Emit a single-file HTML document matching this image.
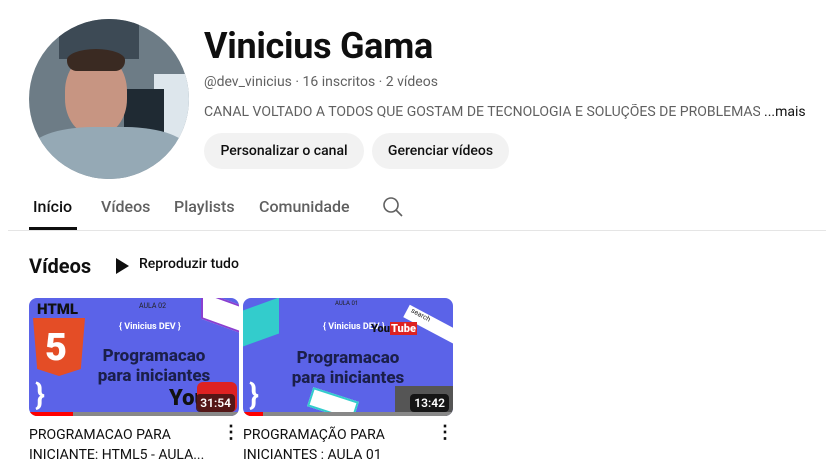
<!DOCTYPE html>
<html><head><meta charset="utf-8"><style>
*{margin:0;padding:0;box-sizing:border-box}
body{width:826px;height:466px;overflow:hidden;background:#fff;font-family:Roboto,"Liberation Sans",Arial,sans-serif;color:#0f0f0f;position:relative}
.a{position:absolute}
.btn{position:absolute;top:133px;height:36px;border-radius:18px;background:#f2f2f2;font-size:14px;font-weight:500;line-height:36px;text-align:center}
.tab{position:absolute;top:197px;font-size:16px;font-weight:500;color:#606060}
.th{position:absolute;top:298px;width:210px;height:118px;border-radius:8px;overflow:hidden;background:#5b63e8}
.dur{position:absolute;right:4px;bottom:4px;background:rgba(0,0,0,.75);color:#fff;font-size:12px;font-weight:600;padding:2px 4px;border-radius:4px}
.bar{position:absolute;left:0;bottom:0;height:4px;width:100%;background:#888}
.bar i{display:block;height:4px;background:#f00}
.big{position:absolute;left:0;width:100%;text-align:center;font-weight:800;color:#1b1f4a;font-size:17px;line-height:20px}
.vt{position:absolute;top:425px;font-size:14px;line-height:20px;width:185px}
.dots{position:absolute;top:424px;font-size:18px;font-weight:700;line-height:18px}
</style></head><body>
<div class="a" style="left:29px;top:19px;width:160px;height:160px;border-radius:50%;overflow:hidden;background:#6d7c86">
 <div class="a" style="left:30px;top:0;width:80px;height:40px;background:#3d4a55"></div>
 <div class="a" style="left:125px;top:55px;width:40px;height:70px;background:#dde6ec"></div>
 <div class="a" style="left:95px;top:70px;width:40px;height:45px;background:#1f2a33"></div>
 <div class="a" style="left:36px;top:36px;width:62px;height:80px;border-radius:45%;background:#c79582"></div>
 <div class="a" style="left:38px;top:30px;width:58px;height:22px;border-radius:50% 50% 10px 10px;background:#3a2a22"></div>
 <div class="a" style="left:0;top:108px;width:160px;height:60px;border-radius:40% 40% 0 0;background:#95a9b5"></div>
</div>
<div class="a" style="left:204px;top:25px;font-size:36px;font-weight:700;letter-spacing:-.3px">Vinicius Gama</div>
<div class="a" style="left:204px;top:74px;font-size:14px;color:#606060">@dev_vinicius · 16 inscritos · 2 vídeos</div>
<div class="a" style="left:204px;top:104px;font-size:14px;color:#606060;white-space:nowrap;width:556px;overflow:hidden">CANAL VOLTADO A TODOS QUE GOSTAM DE TECNOLOGIA E SOLUÇÕES DE PROBLEMAS</div>
<div class="a" style="left:764px;top:104px;font-size:14px;color:#0f0f0f">...mais</div>
<div class="btn" style="left:204px;width:160px">Personalizar o canal</div>
<div class="btn" style="left:372px;width:137px">Gerenciar vídeos</div>
<div class="tab" style="left:33px;color:#0f0f0f">Início</div>
<div class="a" style="left:29px;top:227px;width:48px;height:3px;background:#0f0f0f"></div>
<div class="tab" style="left:101px">Vídeos</div>
<div class="tab" style="left:174px">Playlists</div>
<div class="tab" style="left:259px">Comunidade</div>
<svg class="a" style="left:382px;top:196px" width="22" height="22" viewBox="0 0 22 22"><circle cx="9" cy="9" r="7" fill="none" stroke="#606060" stroke-width="1.6"/><line x1="14" y1="14" x2="20" y2="20" stroke="#606060" stroke-width="1.6"/></svg>
<div class="a" style="left:8px;top:230px;width:818px;height:1px;background:#e5e5e5"></div>
<div class="a" style="left:29px;top:254px;font-size:20px;font-weight:700">Vídeos</div>
<svg class="a" style="left:114px;top:257px" width="16" height="18"><path d="M2 1L15 9L2 17Z" fill="#0f0f0f"/></svg>
<div class="a" style="left:139px;top:256px;font-size:14px;font-weight:500">Reproduzir tudo</div>

<div class="th" style="left:29px">
 <div class="a" style="left:8px;top:2px;font-weight:900;font-size:15px;color:#111">HTML</div>
 <div class="a" style="left:4px;top:20px;width:52px;height:58px;background:#e44d26;clip-path:polygon(0 0,100% 0,92% 88%,50% 100%,8% 88%)"></div>
 <div class="a" style="left:16px;top:30px;font-weight:900;font-size:38px;color:#fff;line-height:40px">5</div>
 <div class="a" style="left:110px;top:4px;font-size:7px;color:#222">AULA 02</div>
 <div class="a" style="left:172px;top:0;width:40px;height:28px;background:#fff;border:2px solid #8a3fd0;transform:skewY(20deg)"></div>
 <div class="a" style="left:90px;top:24px;font-size:9px;color:#fff;font-weight:700">{ Vinicius DEV }</div>
 <div class="big" style="top:48px;left:20px">Programacao<br>para iniciantes</div>
 <div class="a" style="left:6px;top:80px;font-size:30px;color:#fff;font-weight:700">}</div>
 <div class="a" style="left:140px;top:88px;font-size:22px;font-weight:900;color:#111">You</div>
 <div class="a" style="left:168px;top:84px;width:40px;height:30px;background:#d22;border-radius:6px"></div>
 <div class="dur" style="background:rgba(60,20,20,.85)">31:54</div>
 <div class="bar"><i style="width:44px"></i></div>
</div>
<div class="th" style="left:243px">
 <div class="a" style="left:0;top:6px;width:36px;height:36px;background:#3cc;transform:skewY(-20deg)"></div>
 <div class="a" style="left:92px;top:2px;font-size:6px;color:#222">AULA 01</div>
 <div class="a" style="left:160px;top:20px;width:60px;height:14px;background:#fff;transform:rotate(28deg);font-size:7px;color:#222;padding-left:4px">search</div>
 <div class="a" style="left:80px;top:24px;font-size:9px;color:#fff;font-weight:700">{ Vinicius DEV }</div>
 <div class="a" style="left:128px;top:24px;font-size:11px;font-weight:900;color:#111">You<span style="background:#d22;color:#fff;padding:0 1px">Tube</span></div>
 <div class="big" style="top:50px">Programacao<br>para iniciantes</div>
 <div class="a" style="left:6px;top:80px;font-size:30px;color:#fff;font-weight:700">}</div>
 <div class="a" style="left:66px;top:96px;width:48px;height:20px;background:#fff;border:2px solid #3cc;transform:rotate(18deg)"></div>
 <div class="a" style="left:152px;top:88px;width:58px;height:30px;background:#555"></div>
 <div class="dur">13:42</div>
 <div class="bar"><i style="width:20px"></i></div>
</div>
<div class="vt" style="left:29px">PROGRAMACAO PARA<br>INICIANTE: HTML5 - AULA...</div>
<div class="dots" style="left:222px">⋮</div>
<div class="vt" style="left:243px">PROGRAMAÇÃO PARA<br>INICIANTES : AULA 01</div>
<div class="dots" style="left:436px">⋮</div>
</body></html>
